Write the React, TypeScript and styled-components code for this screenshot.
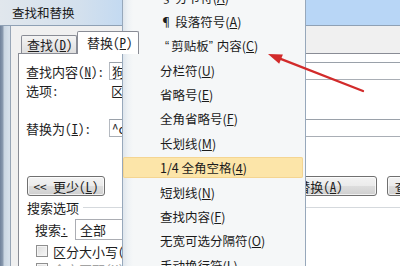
import React from "react";
import styled, { createGlobalStyle } from "styled-components";

const GlobalStyle = createGlobalStyle`
  html, body {
    margin: 0;
    padding: 0;
    background: #ffffff;
  }
  body {
    font-family: "Noto Sans Mono CJK SC", "Noto Sans CJK SC", sans-serif;
    color: #1e1e1e;
  }
  * { box-sizing: border-box; }
`;

const Screen = styled.div`
  position: relative;
  width: 400px;
  height: 266px;
  overflow: hidden;
  background: #fff;
`;

const Window = styled.div`
  display: flex;
  flex-direction: column;
  width: 520px;
  height: 100%;
`;

const TitleBar = styled.div`
  flex: none;
  height: 26px;
  display: flex;
  align-items: center;
  padding-left: 12px;
  background: linear-gradient(to right, #e1e7ed 0px, #d3e0ed 80px, #c4daf1 120px, #b8d6f6 300px);
  border-bottom: 1px solid #8fa1b5;
  font-family: "Noto Sans CJK SC", sans-serif;
  font-size: 12.5px;
  color: #1a1a1a;
`;

const Frame = styled.div`
  flex: 1;
  display: flex;
  min-height: 0;
`;

const FrameEdge = styled.div`
  flex: none;
  width: 11px;
  background: linear-gradient(to right, #6f819a 0, #8d9db1 3px, #c9d5e1 4px, #d6e0ea 9px);
  border-right: 1px solid #97a5b6;
`;

const Body = styled.div`
  flex: 1;
  display: flex;
  flex-direction: column;
  background: #f0f0f0;
  padding-left: 7px;
`;

const TabStrip = styled.div`
  flex: none;
  height: 27px;
  display: flex;
  align-items: flex-end;
  padding-left: 3px;
`;

const Tab = styled.div<{ $active?: boolean }>`
  display: flex;
  align-items: center;
  font-size: 13px;
  border: 1px solid #898c95;
  border-bottom: none;
  border-radius: 2px 2px 0 0;
  width: ${(p) => (p.$active ? "62px" : "56px")};
  height: ${(p) => (p.$active ? "23px" : "18px")};
  margin-bottom: ${(p) => (p.$active ? "-1px" : "0")};
  padding-left: ${(p) => (p.$active ? "9px" : "5px")};
  padding-bottom: ${(p) => (p.$active ? "2px" : "0")};
  background: ${(p) =>
    p.$active ? "#ffffff" : "linear-gradient(#f4f4f4, #dedede)"};
  position: relative;
  z-index: ${(p) => (p.$active ? 1 : 0)};
`;

const Panel = styled.div`
  flex: 1;
  display: flex;
  flex-direction: column;
  background: #ffffff;
  border-top: 1px solid #898c95;
  border-left: 1px solid #898c95;
  padding-left: 7px;
  font-size: 13px;
`;

const Row = styled.div<{ $mt?: number; $h?: number }>`
  flex: none;
  display: flex;
  align-items: center;
  margin-top: ${(p) => p.$mt ?? 0}px;
  height: ${(p) => p.$h ?? 18}px;
`;

const Label = styled.div<{ $w?: number; $ml?: number }>`
  flex: none;
  width: ${(p) => (p.$w ? `${p.$w}px` : "auto")};
  margin-left: ${(p) => p.$ml ?? 0}px;
  white-space: nowrap;
`;

const TextBox = styled.div`
  flex: none;
  width: 400px;
  height: 18px;
  display: flex;
  align-items: center;
  padding-left: 2px;
  background: #fff;
  border: 1px solid #b5bac1;
  border-top-color: #9aa1aa;
  border-bottom-color: #a9aeb5;
`;

const Value = styled.div`
  margin-left: 2px;
  white-space: nowrap;
`;

const Button = styled.div<{ $w: number; $ml?: number }>`
  flex: none;
  width: ${(p) => p.$w}px;
  height: 20px;
  margin-left: ${(p) => p.$ml ?? 0}px;
  display: flex;
  align-items: center;
  justify-content: center;
  white-space: nowrap;
  border: 1px solid #707070;
  border-radius: 3px;
  background: linear-gradient(#f3f3f3 0%, #ebebeb 48%, #dddddd 52%, #cfcfcf 100%);
  box-shadow: inset 0 0 0 1px rgba(255, 255, 255, 0.7);
`;

const GroupLine = styled.div`
  flex: 1;
  height: 1px;
  margin-left: 4px;
  background: #d5d9dd;
`;

const Combo = styled.div`
  flex: none;
  width: 125px;
  height: 21px;
  display: flex;
  align-items: center;
  padding-left: 4px;
  background: #fff;
  border: 1px solid #abadb3;
`;

const Check = styled.div`
  flex: none;
  width: 12px;
  height: 12px;
  margin-left: 10px;
  margin-right: 5px;
  border: 1px solid #8f8f8f;
  background: linear-gradient(135deg, #dcdcdc, #f8f8f8);
  box-shadow: inset 0 0 0 1px #f4f4f4;
`;

const CheckText = styled.div<{ $disabled?: boolean }>`
  white-space: nowrap;
  color: ${(p) => (p.$disabled ? "#a3a3a3" : "#1e1e1e")};
`;

/* special characters popup */
const Menu = styled.div`
  position: absolute;
  left: 122px;
  top: 0;
  width: 184px;
  height: 266px;
  overflow: hidden;
  border-left: 1px solid #97a8bb;
  border-right: 1px solid #97a8bb;
  padding-right: 2px;
  background: linear-gradient(to right, #dfe6ed 0, #eef2f5 5px, #f5f7f8 10px);
  font-family: "Noto Sans CJK SC", sans-serif;
  font-size: 12.5px;
  color: #1b1b1b;
`;

const MenuList = styled.div`
  display: flex;
  flex-direction: column;
  gap: 3.4px;
  margin-top: -13.5px;
`;

const MenuItem = styled.div<{ $hot?: boolean }>`
  flex: none;
  height: 21px;
  display: flex;
  align-items: center;
  padding-left: 37px;
  white-space: nowrap;
  border-radius: 2px;
  background: ${(p) => (p.$hot ? "#fce5a9" : "transparent")};
  box-shadow: ${(p) => (p.$hot ? "inset 0 0 0 1px #f4d592" : "none")};
`;

const Quote = styled.span<{ $ml?: number; $mr?: number }>`
  font-family: "Liberation Sans", sans-serif;
  margin-left: ${(p) => p.$ml ?? 0}px;
  margin-right: ${(p) => p.$mr ?? 0}px;
`;

const Arrow = styled.svg`
  position: absolute;
  left: 0;
  top: 0;
  pointer-events: none;
`;

const menuItems: { text: React.ReactNode; key: string; hot?: boolean }[] = [
  { text: <>§ 分节符(<u>A</u>)</>, key: "sect" },
  { text: <>¶ 段落符号(<u>A</u>)</>, key: "para" },
  {
    text: (
      <>
        <Quote $ml={5} $mr={2}>“</Quote>剪贴板<Quote $mr={4}>”</Quote>内容(<u>C</u>)
      </>
    ),
    key: "clip",
  },
  { text: <>分栏符(<u>U</u>)</>, key: "col" },
  { text: <>省略号(<u>E</u>)</>, key: "ell" },
  { text: <>全角省略号(<u>F</u>)</>, key: "fell" },
  { text: <>长划线(<u>M</u>)</>, key: "em" },
  { text: <>1/4 全角空格(<u>4</u>)</>, key: "q", hot: true },
  { text: <>短划线(<u>N</u>)</>, key: "en" },
  { text: <>查找内容(<u>F</u>)</>, key: "find" },
  { text: <>无宽可选分隔符(<u>O</u>)</>, key: "zw" },
  { text: <>手动换行符(<u>L</u>)</>, key: "lb" },
];

const App: React.FC = () => {
  return (
    <Screen>
      <GlobalStyle />
      <Window>
        <TitleBar>查找和替换</TitleBar>
        <Frame>
          <FrameEdge />
          <Body>
            <TabStrip>
              <Tab>查找(<u>D</u>)</Tab>
              <Tab $active>替换(<u>P</u>)</Tab>
            </TabStrip>
            <Panel>
              <Row $mt={8}>
                <Label $w={83}>查找内容(<u>N</u>):</Label>
                <TextBox>狗</TextBox>
              </Row>
              <Row $h={20}>
                <Label $w={83}>选项:</Label>
                <Value>区分全/半角</Value>
              </Row>
              <Row $mt={19}>
                <Label $w={83}>替换为(<u>I</u>):</Label>
                <TextBox>^c</TextBox>
              </Row>
              <Row $mt={39} $h={20}>
                <Button $w={78} $ml={1}>&lt;&lt; 更少(<u>L</u>)</Button>
                <Button $w={140} $ml={132}>全部替换(<u>A</u>)</Button>
                <Button $w={100} $ml={10}>查找下一处(<u>F</u>)</Button>
              </Row>
              <Row $mt={3} $h={16}>
                <Label $ml={1}>搜索选项</Label>
                <GroupLine />
              </Row>
              <Row $mt={4} $h={21}>
                <Label $w={40} $ml={9}>搜索<u>:</u></Label>
                <Combo>全部</Combo>
              </Row>
              <Row $mt={3} $h={16}>
                <Check />
                <CheckText>区分大小写(<u>H</u>)</CheckText>
              </Row>
              <Row $mt={2} $h={16}>
                <Check />
                <CheckText $disabled>全字匹配(<u>Y</u>)</CheckText>
              </Row>
            </Panel>
          </Body>
        </Frame>
      </Window>

      <Menu>
        <MenuList>
          {menuItems.map((m) => (
            <MenuItem key={m.key} $hot={m.hot}>
              {m.text}
            </MenuItem>
          ))}
        </MenuList>
      </Menu>

      <Arrow width="400" height="266" viewBox="0 0 400 266">
        <line x1="363" y1="91" x2="280" y2="58.6" stroke="#d22b2b" strokeWidth="2.3" strokeLinecap="round" />
        <polygon points="268,54 282.9,54.5 279.2,63.8" fill="#d22b2b" />
      </Arrow>
    </Screen>
  );
};

export default App;
